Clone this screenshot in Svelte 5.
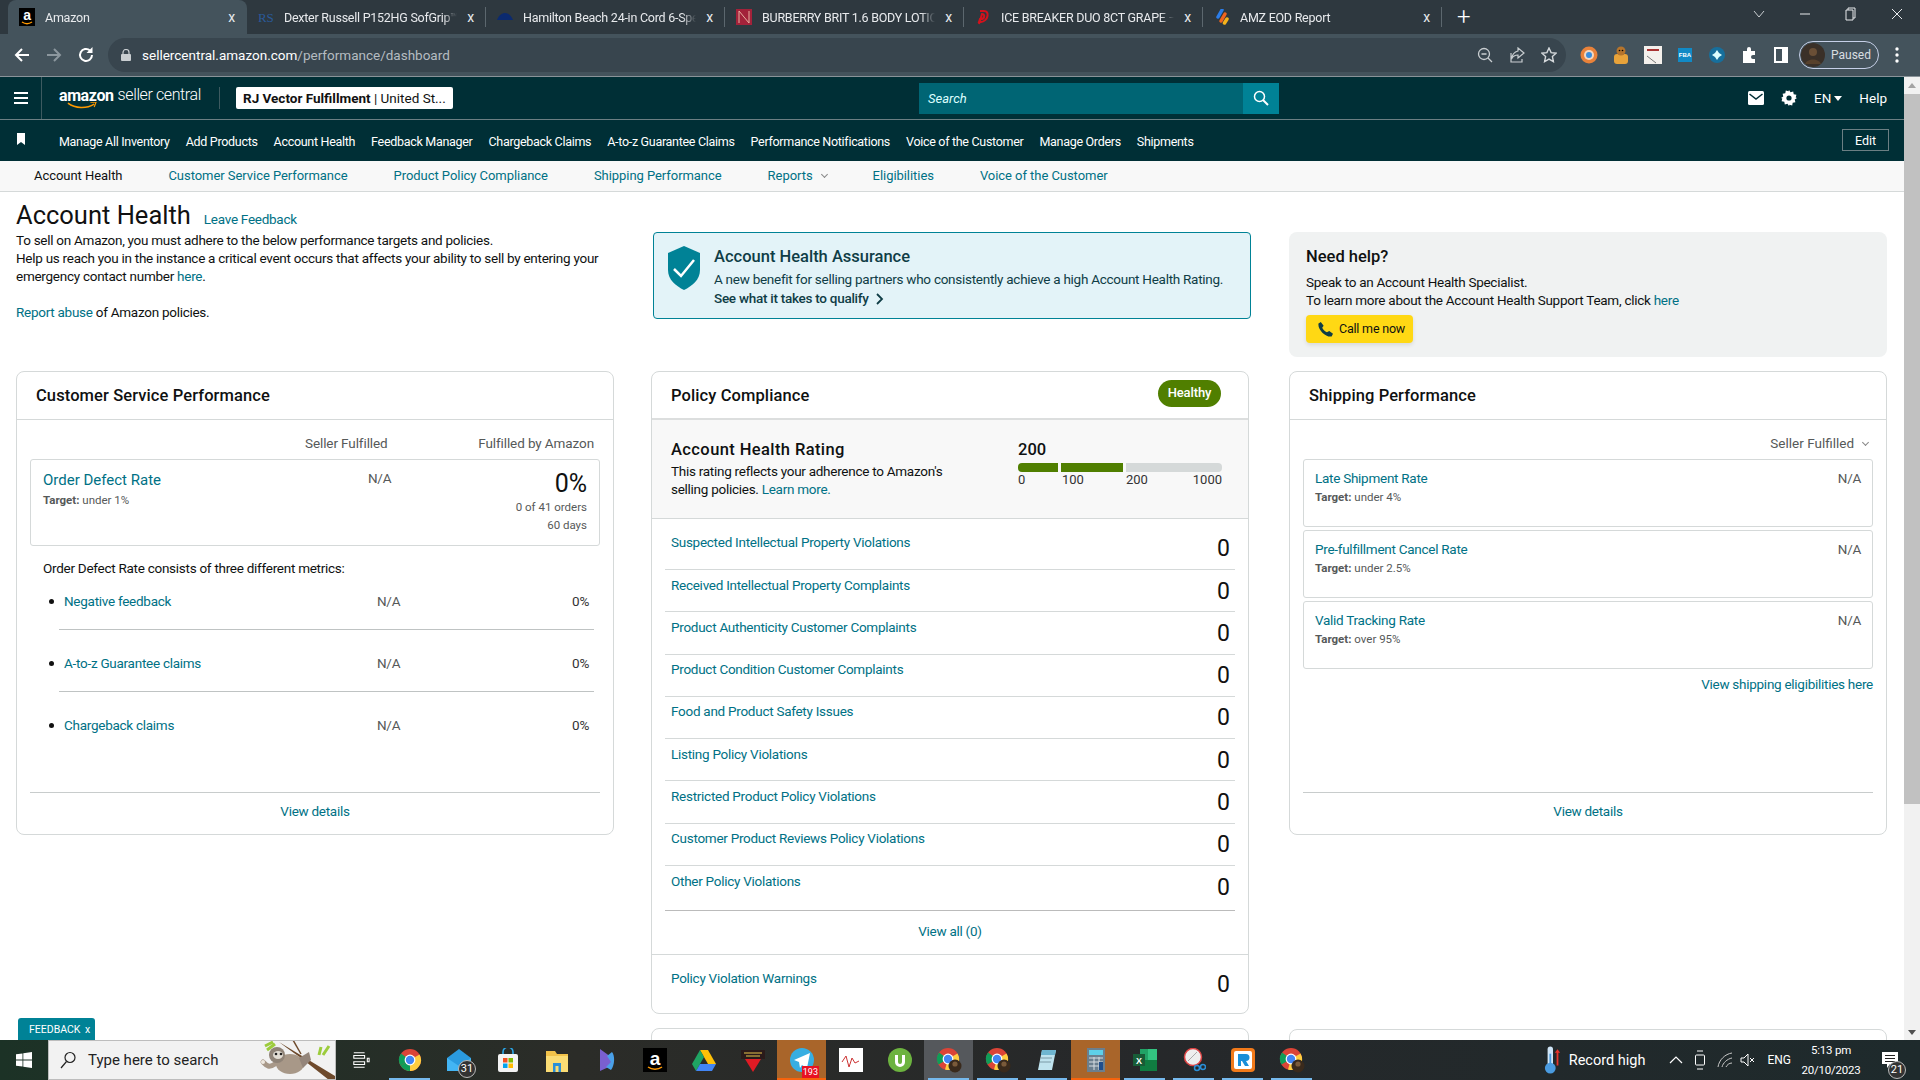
<script>
	const chromeIcon = `<svg viewBox="0 0 24 24" width="24" height="24"><circle cx="12" cy="12" r="11" fill="#db4437"/><path d="M12 12 2.5 17.5A11 11 0 0 1 3 5.5z" fill="#0f9d58"/><path d="M12 12l9.5-5.5A11 11 0 0 1 9 22.6z" fill="#ffcd40"/><path d="M12 12 2.5 17.5A11 11 0 0 0 12 23z" fill="#0f9d58"/><circle cx="12" cy="12" r="5.4" fill="#fff"/><circle cx="12" cy="12" r="4.2" fill="#4285f4"/></svg>`;
	const chromeProfile = `<svg viewBox="0 0 26 26" width="26" height="26"><circle cx="12" cy="12" r="11" fill="#db4437"/><path d="M12 12 2.5 17.5A11 11 0 0 1 3 5.5z" fill="#0f9d58"/><path d="M12 12l9.5-5.5A11 11 0 0 1 9 22.6z" fill="#ffcd40"/><circle cx="12" cy="12" r="5.4" fill="#fff"/><circle cx="12" cy="12" r="4.2" fill="#4285f4"/><circle cx="19" cy="19" r="6.5" fill="#3a2a1c"/><circle cx="19" cy="17" r="2.6" fill="#7a5a3a"/></svg>`;

	const tabs = [
		{ title: 'Dexter Russell P152HG SofGrip™', icon: `<svg viewBox="0 0 16 16" width="16" height="16"><text x="0" y="13" font-size="13" font-family="Liberation Serif" fill="#2a5a9a">RS</text></svg>` },
		{ title: 'Hamilton Beach 24-in Cord 6-Speed', icon: `<svg viewBox="0 0 16 16" width="16" height="16"><path d="M0 11C2 6 5 4 8 4s6 2 8 7z" fill="#0b2a6f"/></svg>` },
		{ title: 'BURBERRY BRIT 1.6 BODY LOTION', icon: `<svg viewBox="0 0 16 16" width="16" height="16"><rect width="16" height="16" fill="#a3223a"/><path d="M3 2v12M13 2v12M3 2l10 12" stroke="#e8b0a0" fill="none"/></svg>` },
		{ title: 'ICE BREAKER DUO 8CT GRAPE –', icon: `<svg viewBox="0 0 16 16" width="16" height="16"><path d="M5 2h4c3 0 4 2 3.500 5S9 13 6 13H4l1-3h1c2 0 3-1 3.200-2.500S8.500 5 7 5L4 15" stroke="#d3121c" stroke-width="2" fill="none"/></svg>` },
		{ title: 'AMZ EOD Report', icon: `<svg viewBox="0 0 16 16" width="16" height="16"><path d="M8 1 4 8" stroke="#2b7de9" stroke-width="3.500" stroke-linecap="round"/><path d="M11 5 7 12" stroke="#f0641e" stroke-width="3.500" stroke-linecap="round"/><path d="M13 10l-2.500 4" stroke="#f6b21b" stroke-width="3.500" stroke-linecap="round"/></svg>` }
	];

	const extensions = [
		`<svg viewBox="0 0 18 18" width="18" height="18"><circle cx="9" cy="9" r="8.500" fill="#e9823a"/><circle cx="9" cy="9" r="5" fill="#f3d7c0"/><circle cx="9" cy="9" r="3" fill="#3a8ddc"/></svg>`,
		`<svg viewBox="0 0 18 18" width="18" height="18"><rect x="2" y="8" width="14" height="10" rx="3" fill="#e8a33a"/><circle cx="9" cy="5" r="4.500" fill="#b5742c"/><circle cx="7.500" cy="4.500" r=".8"/><circle cx="10.500" cy="4.500" r=".8"/></svg>`,
		`<svg viewBox="0 0 18 18" width="18" height="18"><rect width="18" height="18" fill="#f4f0ec"/><path d="M3 4h12" stroke="#a33" stroke-width="2"/><path d="M3 10l9 7" stroke="#777" fill="none"/></svg>`,
		`<svg viewBox="0 0 18 18" width="18" height="18"><rect x="2" y="2" width="14" height="14" fill="#118ac6"/><text x="9" y="11" font-size="6" font-weight="700" text-anchor="middle" font-family="Liberation Sans" fill="#fff">FBA</text></svg>`,
		`<svg viewBox="0 0 18 18" width="18" height="18"><circle cx="9" cy="9" r="8" fill="#176f9c"/><path d="M9 4l2 3-2 2-2-2zM9 14l2-3-2-2-2 2zM4 9l3-2 2 2-2 2zM14 9l-3-2-2 2 2 2z" fill="#dff"/></svg>`,
		`<svg viewBox="0 0 18 18" width="18" height="18"><path d="M3 5h4V3a2 2 0 0 1 4 0v2h4v4h-2a2 2 0 0 0 0 4h2v4H3z" fill="#fff"/></svg>`,
		`<svg viewBox="0 0 18 18" width="18" height="18"><path d="M3 2h12v14H3z" fill="none" stroke="#fff" stroke-width="2"/><rect x="10" y="2" width="5" height="14" fill="#fff"/></svg>`
	];

	const nav = ['Manage All Inventory', 'Add Products', 'Account Health', 'Feedback Manager', 'Chargeback Claims', 'A-to-z Guarantee Claims', 'Performance Notifications', 'Voice of the Customer', 'Manage Orders', 'Shipments'];

	const metrics = ['Negative feedback', 'A-to-z Guarantee claims', 'Chargeback claims'];

	const violations = ['Suspected Intellectual Property Violations', 'Received Intellectual Property Complaints', 'Product Authenticity Customer Complaints', 'Product Condition Customer Complaints', 'Food and Product Safety Issues', 'Listing Policy Violations', 'Restricted Product Policy Violations', 'Customer Product Reviews Policy Violations', 'Other Policy Violations'];

	const shipping = [
		{ name: 'Late Shipment Rate', target: 'under 4%' },
		{ name: 'Pre-fulfillment Cancel Rate', target: 'under 2.5%' },
		{ name: 'Valid Tracking Rate', target: 'over 95%' }
	];

	const apps = [
		{ icon: `<svg viewBox="0 0 20 20" width="18" height="20"><path d="M2 2h12M2 5h12v3H2zM2 12h12v3H2zM2 18h12M17 8h2v4h-2z" stroke="#fff" fill="none" stroke-width="1.200"/></svg>` },
		{ open: true, icon: chromeIcon },
		{ badge: '31', icon: `<svg viewBox="0 0 26 26" width="26" height="26"><path d="M1 11 13 2l12 9v13H1z" fill="#2b9be0"/><path d="M1 11l12 8 12-8v13H1z" fill="#43b5f4"/></svg>` },
		{ icon: `<svg viewBox="0 0 24 24" width="24" height="24"><path d="M7 7V4a5 5 0 0 1 10 0v3" fill="none" stroke="#2aa6e8" stroke-width="1.600"/><rect x="2" y="6" width="20" height="18" rx="2" fill="#f3f3f3"/><rect x="7" y="10" width="4.500" height="4.500" fill="#f25022"/><rect x="12.500" y="10" width="4.500" height="4.500" fill="#7fba00"/><rect x="7" y="15.500" width="4.500" height="4.500" fill="#00a4ef"/><rect x="12.500" y="15.500" width="4.500" height="4.500" fill="#ffb900"/></svg>` },
		{ icon: `<svg viewBox="0 0 24 24" width="24" height="24"><path d="M1 3h9l2 3h11v18H1z" fill="#f2c24a"/><path d="M1 8h22v16H1z" fill="#fbdc74"/><path d="M8 24v-9h8v9h-2.500v-6h-3v6z" fill="#2a8fd8"/></svg>` },
		{ icon: `<svg viewBox="0 0 24 24" width="24" height="24"><path d="M6 1l11 8v9l-11 5z" fill="#7a5fd0"/><path d="M18 4c3 3 3 13-1 18l-5-3 5-5-4-6z" fill="#4aa0e8"/></svg>` },
		{ icon: `<svg viewBox="0 0 24 24" width="24" height="24"><rect width="24" height="24" fill="#000"/><text x="12" y="17" font-size="19" font-weight="700" text-anchor="middle" font-family="Liberation Sans" fill="#fff">a</text><path d="M5 19c4 3 10 3 14 0" stroke="#f90" stroke-width="1.500" fill="none"/></svg>` },
		{ icon: `<svg viewBox="0 0 24 24" width="24" height="24"><path d="M8 2h8l8 14h-8z" fill="#ffc107"/><path d="M8 2 0 16l4 7 8-14z" fill="#1fa463"/><path d="M4 23h16l4-7H8z" fill="#4285f4"/></svg>` },
		{ icon: `<svg viewBox="0 0 24 24" width="24" height="24"><rect y="2" width="24" height="9" fill="#2a1a1a"/><path d="M4 11h16l-8 13z" fill="#e01b24"/><path d="M3 5h18M5 8h14" stroke="#e8c34a"/></svg>` },
		{ active: true, badge2: '193', icon: `<svg viewBox="0 0 24 24" width="24" height="24"><circle cx="12" cy="12" r="12" fill="#37aee2"/><path d="M4 12 20 5l-3 15-5-3-2 3-1-6z" fill="#fff"/></svg>` },
		{ icon: `<svg viewBox="0 0 24 24" width="24" height="24"><rect width="24" height="24" fill="#fff"/><path d="M3 14l4-6 3 11 3-9 3 5 4-2" stroke="#c33" fill="none"/></svg>` },
		{ icon: `<svg viewBox="0 0 24 24" width="24" height="24"><circle cx="12" cy="12" r="12" fill="#6cb33f"/><path d="M7 7v7a5 5 0 0 0 10 0V7h-3v7a2 2 0 0 1-4 0V7z" fill="#fff"/></svg>` },
		{ open: true, hover: true, icon: chromeProfile },
		{ open: true, icon: chromeProfile },
		{ open: true, icon: `<svg viewBox="0 0 24 24" width="24" height="24"><path d="M7 2h14l-4 20H3z" fill="#bfe3ee"/><path d="M7 2h14l-1 5H6z" fill="#6fb6d0"/><path d="M6 10h11M5 14h11" stroke="#7b9aa6"/></svg>` },
		{ active: true, icon: `<svg viewBox="0 0 18 24" width="18" height="24"><rect width="18" height="24" fill="#6b7f8e"/><rect x="2" y="2" width="14" height="5" fill="#5ed0e8"/><path d="M2 10h14M2 14h14M2 18h14M7 9v13M12 9v13" stroke="#d8dee2"/><rect x="12" y="14" width="4" height="8" fill="#1f4e8c"/></svg>` },
		{ open: true, icon: `<svg viewBox="0 0 24 24" width="24" height="24"><rect x="7" y="1" width="17" height="22" fill="#21a366"/><rect x="15" y="1" width="9" height="22" fill="#33c481"/><rect x="7" y="12" width="17" height="11" fill="#107c41"/><rect y="6" width="12" height="12" fill="#185c37"/><text x="6" y="15.500" font-size="9" font-weight="700" text-anchor="middle" font-family="Liberation Sans" fill="#fff">X</text></svg>` },
		{ open: true, icon: `<svg viewBox="0 0 24 24" width="24" height="24"><circle cx="11" cy="9" r="8.500" fill="#eee" stroke="#d44" stroke-width="1.500"/><path d="M6 13 15 4" stroke="#aaa"/><circle cx="15" cy="20" r="2.500" fill="none" stroke="#2a8fd8" stroke-width="1.500"/><circle cx="21" cy="19" r="2.500" fill="none" stroke="#2a8fd8" stroke-width="1.500"/></svg>` },
		{ open: true, icon: `<svg viewBox="0 0 24 24" width="24" height="24"><rect width="24" height="24" rx="4" fill="#f27a1a"/><rect x="3" y="3" width="18" height="18" rx="2" fill="#fff"/><path d="M7 6h8a3 3 0 0 1 0 7l3 5h-4l-3-5h-1v5H7z" fill="#1a8fd8"/></svg>` },
		{ open: true, icon: chromeProfile }
	];
</script>

<div class="screen">
	<div class="tabstrip">
		<div class="tab current">
			<svg viewBox="0 0 16 18" width="16" height="18"><rect width="16" height="18" fill="#000"/><text x="8" y="12" font-size="14" font-weight="700" text-anchor="middle" font-family="Liberation Sans" fill="#fff">a</text><path d="M3 14c3 2 7 2 10 0" stroke="#f90" stroke-width="1.500" fill="none"/></svg>
			<span class="tab-title">Amazon</span>
			<span class="tab-x">x</span>
		</div>
		{#each tabs as tab}
			<div class="tab">
				{@html tab.icon}
				<span class="tab-title">{tab.title}</span>
				<span class="tab-x">x</span>
			</div>
		{/each}
		<span class="new-tab">+</span>
		<div class="win-controls">
			<svg viewBox="0 0 12 8" width="12" height="8"><path d="M1 1l5 6 5-6" fill="none" stroke="#c9ced1"/></svg>
			<svg viewBox="0 0 12 12" width="12" height="12"><path d="M1 6h10" stroke="#e8eaed"/></svg>
			<svg viewBox="0 0 12 14" width="12" height="14"><path d="M1 3h7v10H1zM3 3V1h7v10H8" fill="none" stroke="#e8eaed"/></svg>
			<svg viewBox="0 0 12 12" width="12" height="12"><path d="M1 1l10 10M11 1 1 11" stroke="#e8eaed"/></svg>
		</div>
	</div>

	<div class="toolbar">
		<div class="tb-nav">
			<svg viewBox="0 0 18 18" width="18" height="18"><path d="M16 9H3M9 3 3 9l6 6" fill="none" stroke="#fff" stroke-width="2"/></svg>
			<svg viewBox="0 0 18 18" width="18" height="18"><path d="M2 9h13M9 3l6 6-6 6" fill="none" stroke="#8c979e" stroke-width="2"/></svg>
			<svg viewBox="0 0 18 18" width="18" height="18"><path d="M15 9a6 6 0 1 1-2-4.500" fill="none" stroke="#fff" stroke-width="2"/><path d="M15.500 1v6h-6z" fill="#fff"/></svg>
		</div>
		<div class="omnibox">
			<svg viewBox="0 0 10 12" width="10" height="12"><path d="M2 5V3.500a3 3 0 0 1 6 0V5" fill="none" stroke="#c9ced1" stroke-width="1.200"/><rect y="5" width="10" height="7" rx="1" fill="#c9ced1"/></svg>
			<span class="url">sellercentral.amazon.com<span class="url-path">/performance/dashboard</span></span>
			<div class="omni-icons">
				<svg viewBox="0 0 16 16" width="16" height="16"><circle cx="7" cy="7" r="5.500" fill="none" stroke="#c9ced1" stroke-width="1.300"/><path d="M11 11l4 4M4.500 7h5" stroke="#c9ced1" stroke-width="1.300"/></svg>
				<svg viewBox="0 0 16 16" width="16" height="16"><path d="M9 1l6 5-6 5V8C6 8 4 9 2.500 12 3 8 5 5 9 4zM2 6v9h11v-3" fill="none" stroke="#c9ced1" stroke-width="1.200"/></svg>
				<svg viewBox="0 0 16 16" width="16" height="16"><path d="M8 1l2.100 4.600 5 .6-3.700 3.400 1 5L8 12.100 3.600 14.600l1-5L.9 6.200l5-.6z" fill="none" stroke="#d5d9dc" stroke-width="1.400"/></svg>
			</div>
		</div>
		<div class="extensions">
			{#each extensions as ext}
				<span class="ext">{@html ext}</span>
			{/each}
		</div>
		<div class="profile">
			<svg viewBox="0 0 24 24" width="24" height="24"><circle cx="12" cy="12" r="12" fill="#3a3028"/><circle cx="12" cy="9" r="4" fill="#6a4f36"/><path d="M4 21c2-6 14-6 16 0" fill="#57412c"/></svg>
			<span>Paused</span>
		</div>
		<svg class="dots" viewBox="0 0 4 16" width="4" height="16"><circle cx="2" cy="2" r="1.700" fill="#fff"/><circle cx="2" cy="8" r="1.700" fill="#fff"/><circle cx="2" cy="14" r="1.700" fill="#fff"/></svg>
	</div>

	<div class="viewport">
		<div class="page">
			<header class="topbar">
				<div class="burger"><span></span><span></span><span></span></div>
				<div class="logo">
					<span class="logo-amazon">amazon<svg viewBox="0 0 32 8" width="30" height="8"><path d="M1 1c8 6 20 6 28 1" fill="none" stroke="#f90" stroke-width="1.600"/><path d="M25 0h6l-2 5" fill="none" stroke="#f90" stroke-width="1.200"/></svg></span>
					<span class="logo-seller">seller central</span>
				</div>
				<div class="account"><b>RJ Vector Fulfillment</b> | United St...</div>
				<div class="search">
					<span class="search-input">Search</span>
					<span class="search-btn"><svg viewBox="0 0 16 16" width="16" height="16"><circle cx="6.500" cy="6.500" r="5" fill="none" stroke="#fff" stroke-width="1.500"/><path d="M10 10l5 5" stroke="#fff" stroke-width="2"/></svg></span>
				</div>
				<div class="top-right">
					<svg viewBox="0 0 16 14" width="16" height="14"><rect width="16" height="14" rx="1.500" fill="#fff"/><path d="M1.500 3 8 8l6.500-5" fill="none" stroke="#002f36" stroke-width="1.500"/></svg>
					<svg viewBox="0 0 16 16" width="16" height="16"><path d="M8 0l1.500 2.300 2.700-.7.500 2.700 2.700.5-.7 2.700L16 8l-2.300 1.500.7 2.700-2.700.5-.5 2.700-2.700-.7L8 16l-1.500-2.300-2.700.7-.5-2.700-2.700-.5.7-2.700L0 8l2.300-1.500-.7-2.700 2.700-.5.5-2.700 2.700.7z" fill="#fff"/><circle cx="8" cy="8" r="2.600" fill="#002f36"/></svg>
					<span class="lang">EN<i class="caret"></i></span>
					<span>Help</span>
				</div>
			</header>

			<nav class="shortcuts">
				<svg viewBox="0 0 10 12" width="10" height="12"><path d="M1 0h8v12L5 9l-4 3z" fill="#fff"/></svg>
				<div class="shortcut-list">
					{#each nav as item}
						<span>{item}</span>
					{/each}
				</div>
				<button class="edit">Edit</button>
			</nav>

			<div class="subnav">
				<span class="sub-current">Account Health</span>
				<span>Customer Service Performance</span>
				<span>Product Policy Compliance</span>
				<span>Shipping Performance</span>
				<span>Reports<i class="mini-caret"></i></span>
				<span>Eligibilities</span>
				<span>Voice of the Customer</span>
			</div>

			<main class="content">
				<section class="col col-left">
					<div class="intro">
						<div class="title-row">
							<h1>Account Health</h1>
							<a href="#top">Leave Feedback</a>
						</div>
						<p>To sell on Amazon, you must adhere to the below performance targets and policies.<br />Help us reach you in the instance a critical event occurs that affects your ability to sell by entering your emergency contact number <a href="#top">here</a>.</p>
						<p class="abuse"><a href="#top">Report abuse</a> of Amazon policies.</p>
					</div>

					<div class="card short">
						<h2 class="card-head">Customer Service Performance</h2>
						<div class="card-body">
							<div class="col-heads">
								<span class="head-sf">Seller Fulfilled</span>
								<span class="head-fba">Fulfilled by Amazon</span>
							</div>
							<div class="box odr">
								<div class="odr-name">
									<a class="metric-link" href="#top">Order Defect Rate</a>
									<div class="target"><b>Target:</b> under 1%</div>
								</div>
								<div class="odr-na">N/A</div>
								<div class="odr-value">
									<div class="big-pct">0%</div>
									<div class="minor">0 of 41 orders</div>
									<div class="minor">60 days</div>
								</div>
							</div>
							<p class="consists">Order Defect Rate consists of three different metrics:</p>
							<ul class="metric-list">
								{#each metrics as m}
									<li>
										<a href="#top">{m}</a>
										<span class="m-na">N/A</span>
										<span class="m-pct">0%</span>
									</li>
								{/each}
							</ul>
							<div class="card-foot"><a href="#top">View details</a></div>
						</div>
					</div>
				</section>

				<section class="col col-mid">
					<div class="assurance">
						<svg viewBox="0 0 32 44" width="32" height="44"><path d="M16 0 32 7v17c0 10-8 16-16 20C8 40 0 34 0 24V7z" fill="#008296"/><path d="M6 23l7 7L26 14" fill="none" stroke="#fff" stroke-width="2.500"/></svg>
						<div>
							<h3>Account Health Assurance</h3>
							<p>A new benefit for selling partners who consistently achieve a high Account Health Rating.</p>
							<p class="qualify">See what it takes to qualify <svg viewBox="0 0 8 12" width="8" height="12"><path d="M1 1l5 5-5 5" fill="none" stroke="#0f3d46" stroke-width="1.800"/></svg></p>
						</div>
					</div>

					<div class="card">
						<div class="card-head policy-head">
							<h2>Policy Compliance</h2>
							<span class="healthy">Healthy</span>
						</div>
						<div class="rating">
							<div class="rating-text">
								<h3>Account Health Rating</h3>
								<p>This rating reflects your adherence to Amazon's selling policies. <a href="#top">Learn more.</a></p>
							</div>
							<div class="rating-score">
								<div class="score">200</div>
								<div class="bar"><i class="seg-a"></i><i class="seg-b"></i><i class="seg-c"></i></div>
								<div class="scale"><span class="s0">0</span><span class="s1">100</span><span class="s2">200</span><span class="s3">1000</span></div>
							</div>
						</div>
						<div class="violations">
							{#each violations as v}
								<div class="v-row">
									<a href="#top">{v}</a>
									<span class="count">0</span>
								</div>
							{/each}
						</div>
						<div class="view-all"><a href="#top">View all (0)</a></div>
						<div class="warnings">
							<a href="#top">Policy Violation Warnings</a>
							<span class="count">0</span>
						</div>
					</div>
					<div class="card next-card"></div>
				</section>

				<section class="col col-right">
					<div class="help">
						<h3>Need help?</h3>
						<p>Speak to an Account Health Specialist.<br />To learn more about the Account Health Support Team, click <a href="#top">here</a></p>
						<button class="call">
							<svg viewBox="0 0 16 16" width="15" height="15"><path d="M3 0l3 4-1.500 2c1 2 3 4 5 5L12 9.500l4 3-1.500 3C8 16.500-.5 8 .5 1.500z" fill="#0f3d46"/></svg>
							Call me now
						</button>
					</div>

					<div class="card short">
						<h2 class="card-head">Shipping Performance</h2>
						<div class="card-body">
							<div class="ship-filter">Seller Fulfilled<i class="mini-caret"></i></div>
							{#each shipping as s}
								<div class="box ship-box">
									<div>
										<a href="#top">{s.name}</a>
										<div class="target"><b>Target:</b> {s.target}</div>
									</div>
									<span class="ship-na">N/A</span>
								</div>
							{/each}
							<div class="ship-link"><a href="#top">View shipping eligibilities here</a></div>
							<div class="card-foot"><a href="#top">View details</a></div>
						</div>
					</div>
					<div class="card next-card"></div>
				</section>
			</main>
			<div class="feedback">FEEDBACK <span>x</span></div>
		</div>

		<div class="scrollbar">
			<span class="arrow-up"></span>
			<div class="thumb"></div>
			<span class="arrow-down"></span>
		</div>
	</div>

	<footer class="taskbar">
		<div class="start">
			<svg viewBox="0 0 16 16" width="16" height="16"><path d="M0 2.300 6.500 1.400v6.200H0zM7.300 1.300 16 0v7.600H7.300zM0 8.400h6.500v6.200L0 13.700zM7.300 8.400H16V16l-8.700-1.300z" fill="#fff"/></svg>
		</div>
		<div class="tb-search">
			<svg viewBox="0 0 16 18" width="16" height="18"><circle cx="10" cy="6.500" r="5" fill="none" stroke="#222" stroke-width="1.200"/><path d="M6.500 10.500 1 17" stroke="#222" stroke-width="1.200"/></svg>
			<span>Type here to search</span>
			<svg class="sloth" viewBox="0 0 86 40" width="86" height="40">
				<path d="M16 6l8-4M18 10l8-6" stroke="#9ccc3c" stroke-width="3"/>
				<path d="M70 15l2-8M74 15l6-9" stroke="#9ccc3c" stroke-width="3"/>
				<path d="M30 2 86 36v4H80L52 18 38 8z" fill="#6e4a2c"/>
				<path d="M44 0l8 14" stroke="#6e4a2c" stroke-width="1.500"/>
				<ellipse cx="41" cy="24" rx="14" ry="10" fill="#a89888"/>
				<path d="M50 18l10-6 2 8-8 8z" fill="#94857a"/>
				<path d="M26 24C20 28 18 26 14 22" stroke="#a89888" stroke-width="5" fill="none" stroke-linecap="round"/>
				<circle cx="28" cy="15" r="8" fill="#8f8377"/>
				<ellipse cx="29" cy="15" rx="5" ry="4" fill="#e2dcd3"/>
				<circle cx="27" cy="14" r="1.300" fill="#222"/>
				<circle cx="32" cy="14" r="1.300" fill="#222"/>
				<circle cx="14" cy="22" r="2" fill="#efe9e0"/>
			</svg>
		</div>
		<div class="apps">
			{#each apps as app}
				<div class="app" class:open={app.open} class:active={app.active} class:hover={app.hover}>
					{@html app.icon}
					{#if app.badge}<span class="badge-round">{app.badge}</span>{/if}
					{#if app.badge2}<span class="badge-red">{app.badge2}</span>{/if}
				</div>
			{/each}
		</div>
		<div class="tray">
			<svg viewBox="0 0 20 34" width="18" height="32"><rect x="4" y="2" width="6" height="24" rx="3" fill="#cfe5f7"/><circle cx="7" cy="26" r="6" fill="#4a9be0"/><rect x="6" y="10" width="2" height="16" fill="#4a9be0"/><path d="M15 5l3 4h-2v14h-2V9h-2z" fill="#e6332a"/></svg>
			<span class="record">Record high</span>
			<svg viewBox="0 0 14 8" width="14" height="8"><path d="M1 7l6-6 6 6" fill="none" stroke="#fff" stroke-width="1.200"/></svg>
			<svg viewBox="0 0 12 20" width="12" height="20"><path d="M3 1h6M3 19h6" stroke="#fff"/><rect x="1.500" y="5" width="9" height="10" rx="1" fill="none" stroke="#fff"/></svg>
			<svg class="wifi" viewBox="0 0 16 16" width="16" height="16"><path d="M1 15C2 8 8 2 15 1M5 15c1-4 5-8 10-9M9 15c1-2 3-4 6-4" fill="none" stroke="#c8c8c8"/></svg>
			<svg viewBox="0 0 16 16" width="16" height="16"><path d="M1 6h3l4-4v12l-4-4H1z" fill="none" stroke="#fff"/><path d="M10 6l4 4M14 6l-4 4" stroke="#fff"/></svg>
			<span class="eng">ENG</span>
			<div class="clock"><div>5:13 pm</div><div>20/10/2023</div></div>
			<div class="notif">
				<svg viewBox="0 0 16 16" width="16" height="16"><path d="M0 0h16v12H8l-3 4v-4H0z" fill="#fff"/><path d="M3 3.500h10M3 6.500h10M3 9.500h10" stroke="#222"/></svg>
				<span class="badge-round">21</span>
			</div>
		</div>
	</footer>
</div>

<style>
	:global(body) {
		margin: 0;
		background: #fff;
		font-family: Roboto, 'Liberation Sans', sans-serif;
		overflow: hidden;
	}

	.screen {
		width: 1920px;
		height: 1080px;
		display: flex;
		flex-direction: column;
		overflow: hidden;
	}

	a {
		color: #007185;
		text-decoration: none;
	}

	p,
	h1,
	h2,
	h3,
	ul {
		margin: 0;
		padding: 0;
		font-weight: 400;
	}

	/* browser chrome */
	.tabstrip {
		height: 34px;
		background: #2e383f;
		display: flex;
		align-items: center;
		padding-left: 8px;
		color: #e8eaed;
		font-size: 12.500px;
		letter-spacing: -0.25px;
		position: relative;
	}

	.tab {
		width: 239px;
		height: 34px;
		box-sizing: border-box;
		display: flex;
		align-items: center;
		gap: 10px;
		padding: 0 12px 0 11px;
		position: relative;
	}

	.tab + .tab::after {
		content: '';
		position: absolute;
		right: 0;
		top: 7px;
		bottom: 7px;
		width: 1px;
		background: #5c676e;
	}

	.tab.current {
		background: #44535c;
		border-radius: 8px 8px 0 0;
		height: 34px;
	}

	.tab-title {
		flex: 1;
		white-space: nowrap;
		overflow: hidden;
		mask-image: linear-gradient(90deg, #000 92%, transparent);
	}

	.tab-x {
		font-size: 14px;
		color: #e8eaed;
	}

	.new-tab {
		font-size: 24px;
		font-weight: 300;
		margin-left: 15px;
		color: #fff;
		line-height: 1;
	}

	.win-controls {
		margin-left: auto;
		display: flex;
		align-items: center;
		gap: 34px;
		padding: 0 17px 6px 0;
	}

	.toolbar {
		height: 42px;
		background: #44535c;
		display: flex;
		align-items: center;
		border-bottom: 1px solid #8a9399;
	}

	.tb-nav {
		width: 108px;
		box-sizing: border-box;
		padding-left: 13px;
		display: flex;
		gap: 14px;
	}

	.omnibox {
		width: 1458px;
		height: 34px;
		background: #38454e;
		border-radius: 17px;
		box-sizing: border-box;
		display: flex;
		align-items: center;
		padding: 0 9px 0 13px;
		gap: 11px;
	}

	.url {
		color: #fff;
		font-size: 13.500px;
	}

	.url-path {
		color: #b5bcc1;
	}

	.omni-icons {
		margin-left: auto;
		display: flex;
		gap: 16px;
	}

	.extensions {
		display: flex;
		gap: 14px;
		margin-left: 14px;
		align-items: center;
	}

	.ext {
		display: flex;
	}

	.profile {
		margin-left: 9px;
		width: 80px;
		height: 28px;
		border: 1px solid #c6d0e8;
		border-radius: 14px;
		box-sizing: border-box;
		display: flex;
		align-items: center;
		gap: 6px;
		padding-left: 1px;
		color: #d8dde0;
		font-size: 12px;
	}

	.dots {
		margin-left: 16px;
	}

	.viewport {
		flex: 1;
		display: flex;
		min-height: 0;
	}

	.page {
		flex: 1;
		min-width: 0;
		position: relative;
		overflow: hidden;
	}

	/* seller central bars */
	.topbar {
		height: 43px;
		box-sizing: border-box;
		background: #002f36;
		border-bottom: 1px solid #6c7f83;
		display: flex;
		align-items: center;
		color: #fff;
		font-size: 13.500px;
	}

	.burger {
		width: 42px;
		height: 42px;
		border-right: 1px solid #3d5a60;
		display: flex;
		flex-direction: column;
		justify-content: center;
		align-items: center;
		gap: 3px;
		box-sizing: border-box;
	}

	.burger span {
		width: 14px;
		height: 2px;
		background: #fff;
	}

	.logo {
		margin-left: 17px;
		width: 160px;
		height: 22px;
		display: flex;
		align-items: flex-start;
		gap: 4px;
		border-right: 1px solid #3d5a60;
		line-height: 1;
	}

	.logo-amazon {
		font-size: 16px;
		font-weight: 700;
		letter-spacing: -0.4px;
		display: flex;
		flex-direction: column;
		margin-top: 1px;
	}

	.logo-amazon svg {
		margin: -2px 0 0 8px;
	}

	.logo-seller {
		font-size: 16px;
		letter-spacing: -0.4px;
		font-weight: 300;
	}

	.account {
		margin-left: 16px;
		width: 217px;
		height: 22px;
		line-height: 22px;
		box-sizing: border-box;
		padding-left: 7px;
		background: #fff;
		color: #111;
		border-radius: 2px;
		font-size: 13.500px;
		white-space: nowrap;
	}

	.search {
		margin-left: 466px;
		width: 360px;
		height: 31px;
		display: flex;
		background: #006574;
	}

	.search-input {
		flex: 1;
		padding-left: 9px;
		line-height: 31px;
		font-style: italic;
		font-size: 13px;
		color: #dff;
	}

	.search-btn {
		width: 36px;
		background: #008296;
		display: flex;
		align-items: center;
		justify-content: center;
	}

	.top-right {
		margin-left: auto;
		padding-right: 17px;
		display: flex;
		align-items: center;
		gap: 17px;
	}

	.lang {
		display: flex;
		align-items: center;
		gap: 3px;
	}

	.caret {
		border: 4px solid transparent;
		border-top: 5px solid #fff;
		border-bottom: 0;
	}

	.shortcuts {
		height: 41px;
		background: #002f36;
		display: flex;
		align-items: center;
		color: #fff;
		font-size: 12.500px;
		letter-spacing: -0.3px;
		padding-left: 16px;
	}

	.shortcuts svg {
		margin-bottom: 3px;
	}

	.shortcut-list {
		display: flex;
		gap: 16px;
		margin-left: 33px;
		margin-top: 2px;
		white-space: nowrap;
	}

	.edit {
		margin-left: auto;
		margin-right: 15px;
		margin-bottom: 1px;
		width: 47px;
		height: 22px;
		background: transparent;
		color: #fff;
		border: 1px solid #6c7f83;
		font: inherit;
		padding: 0;
	}

	.subnav {
		height: 31px;
		box-sizing: border-box;
		background: #f8f8f8;
		border-bottom: 1px solid #d5d9d9;
		display: flex;
		align-items: center;
		gap: 46px;
		padding: 0 0 2px 34px;
		font-size: 13px;
		letter-spacing: -0.05px;
		color: #007185;
		white-space: nowrap;
	}

	.sub-current {
		color: #0f1111;
	}

	.mini-caret {
		display: inline-block;
		width: 4px;
		height: 4px;
		border-right: 1px solid #888;
		border-bottom: 1px solid #888;
		transform: rotate(45deg);
		margin: 0 0 3px 9px;
	}

	/* content */
	.content {
		display: grid;
		grid-template-columns: 635px 638px 598px;
		padding-left: 16px;
		color: #0f1111;
		font-size: 13.500px;
		letter-spacing: -0.27px;
		line-height: 18px;
	}

	.col {
		width: 598px;
	}

	.col-mid .assurance {
		margin-left: 2px;
		margin-right: -2px;
	}

	.intro {
		height: 179px;
		box-sizing: border-box;
		padding-top: 8px;
	}

	.title-row {
		display: flex;
		align-items: flex-end;
		height: 30px;
		margin-bottom: 1px;
	}

	h1 {
		font-size: 25.500px;
		line-height: 30px;
		color: #111;
		letter-spacing: 0;
	}

	.title-row a {
		margin-left: 13px;
		line-height: 22px;
	}

	.abuse {
		margin-top: 18px;
	}

	.card {
		border: 1px solid #d5d9d9;
		border-radius: 8px;
		background: #fff;
		box-sizing: border-box;
	}

	.short {
		height: 464px;
		display: flex;
		flex-direction: column;
	}

	.card-head {
		height: 48px;
		box-sizing: border-box;
		border-bottom: 1px solid #d5d9d9;
		font-size: 16.500px;
		font-weight: 500;
		letter-spacing: 0.1px;
		line-height: 47px;
		padding-left: 19px;
	}

	.card-body {
		flex: 1;
		padding: 0 13px;
		display: flex;
		flex-direction: column;
		position: relative;
	}

	.col-heads {
		height: 39px;
		position: relative;
		color: #565959;
		letter-spacing: -0.1px;
	}

	.head-sf {
		position: absolute;
		left: 275px;
		top: 14px;
	}

	.head-fba {
		position: absolute;
		right: 6px;
		top: 14px;
	}

	.box {
		border: 1px solid #d5d9d9;
		border-radius: 3px;
		box-sizing: border-box;
	}

	.odr {
		height: 87px;
		display: grid;
		grid-template-columns: 325px 1fr 150px;
		padding: 11px 12px;
	}

	.metric-link {
		font-size: 15px;
		letter-spacing: 0;
	}

	.target {
		font-size: 11.500px;
		letter-spacing: 0;
		color: #565959;
		line-height: 18px;
		margin-top: 2px;
	}

	.target b {
		font-weight: 700;
	}

	.odr-na {
		color: #565959;
		margin-top: -2px;
	}

	.odr-value {
		text-align: right;
	}

	.big-pct {
		font-size: 25px;
		letter-spacing: 0;
		line-height: 28px;
		margin-top: -1px;
	}

	.minor {
		font-size: 11.500px;
		letter-spacing: 0;
		color: #565959;
	}

	.consists {
		margin: 13px 0 0 13px;
	}

	.metric-list {
		list-style: none;
		margin: 15px 0 0 0;
	}

	.metric-list li {
		height: 38px;
		margin-bottom: 24px;
		box-sizing: border-box;
		margin-left: 29px;
		margin-right: 6px;
		border-bottom: 1px solid #bfc3c3;
		display: flex;
		position: relative;
	}

	.metric-list li:last-child {
		border-bottom: 0;
	}

	.metric-list li::before {
		content: '';
		position: absolute;
		left: -10px;
		top: 7px;
		width: 5px;
		height: 5px;
		border-radius: 50%;
		background: #111;
	}

	.metric-list a {
		margin-left: 5px;
		width: 313px;
	}

	.m-na {
		color: #565959;
	}

	.m-pct {
		color: #333;
		margin-left: auto;
		padding-right: 5px;
	}

	.card-foot {
		position: absolute;
		left: 13px;
		right: 13px;
		bottom: 0;
		height: 41px;
		border-top: 1px solid #c8cccc;
		text-align: center;
		line-height: 36px;
	}

	.assurance {
		height: 87px;
		box-sizing: border-box;
		background: #e3f3f8;
		border: 1px solid #008296;
		border-radius: 4px;
		display: flex;
		gap: 14px;
		padding: 14px 14px;
		margin-bottom: 52px;
		margin-top: 40px;
		color: #0f3d46;
	}

	.assurance svg {
		margin-top: -1px;
	}

	.assurance h3 {
		font-size: 16.500px;
		font-weight: 500;
		letter-spacing: 0;
		line-height: 20px;
		margin-bottom: 3px;
	}

	.qualify {
		font-weight: 500;
		margin-top: 1px;
	}

	.qualify svg {
		margin: 0 0 0 4px;
		vertical-align: -2px;
	}

	.policy-head {
		display: flex;
		justify-content: space-between;
		align-items: center;
		border-bottom: 2px solid #dcdede;
		padding-right: 27px;
		height: 48px;
	}

	.policy-head h2 {
		font-size: 16.500px;
		font-weight: 500;
	}

	.healthy {
		background: #507f00;
		color: #fff;
		border-radius: 14px;
		height: 27px;
		width: 63px;
		text-align: center;
		line-height: 25px;
		font-size: 13px;
		font-weight: 500;
		letter-spacing: -0.1px;
		margin-top: -3px;
	}

	.rating {
		height: 99px;
		background: #f8f8f8;
		border-bottom: 1px solid #d5d9d9;
		display: flex;
		box-sizing: border-box;
		padding: 19px 26px 0 19px;
		justify-content: space-between;
	}

	.rating-text {
		width: 285px;
	}

	.rating h3,
	.score {
		font-size: 16.500px;
		font-weight: 500;
		letter-spacing: 0.4px;
		line-height: 22px;
		margin-bottom: 1px;
	}

	.rating-score {
		width: 204px;
	}

	.score {
		margin-bottom: 2px;
		letter-spacing: 0;
	}

	.bar {
		display: flex;
		gap: 3px;
		height: 9px;
	}

	.bar i {
		display: block;
		height: 9px;
	}

	.seg-a {
		width: 40px;
		background: #507f00;
		border-radius: 4px 0 0 4px;
	}

	.seg-b {
		width: 62px;
		background: #507f00;
	}

	.seg-c {
		flex: 1;
		background: #d5d9d9;
		border-radius: 0 4px 4px 0;
	}

	.scale {
		position: relative;
		height: 16px;
		font-size: 13px;
		letter-spacing: 0;
		line-height: 16px;
		color: #333;
	}

	.scale span {
		position: absolute;
		top: 0;
	}

	.s0 { left: 0; }
	.s1 { left: 44px; }
	.s2 { left: 108px; }
	.s3 { right: 0; }

	.violations {
		padding: 0 13px;
	}

	.v-row {
		height: 42.300px;
		box-sizing: border-box;
		border-bottom: 1px solid #d5d9d9;
		display: flex;
		justify-content: space-between;
		padding: 5.500px 5px 0 6px;
	}

	.v-row:first-child {
		height: 51px;
		padding-top: 14px;
	}

	.v-row:last-child {
		height: 45px;
		border-bottom-color: #bbb;
	}

	.count {
		font-size: 23px;
		letter-spacing: 0;
		color: #111;
		margin-top: 6px;
		line-height: 20px;
	}

	.view-all {
		text-align: center;
		height: 44px;
		border-bottom: 1px solid #d5d9d9;
		line-height: 41px;
		box-sizing: border-box;
	}

	.warnings {
		display: flex;
		justify-content: space-between;
		padding: 14px 18px 0 19px;
	}

	.next-card {
		height: 40px;
		margin-top: 14px;
	}

	.col-right .next-card {
		margin-top: 194px;
	}

	.col-mid .card {
		height: 643px;
	}

	.col-mid .next-card {
		height: 40px;
	}

	.help {
		height: 125px;
		background: #f0f2f2;
		border-radius: 8px;
		box-sizing: border-box;
		padding: 15px 17px;
		margin: 40px 0 14px;
	}

	.help h3 {
		font-size: 16.500px;
		font-weight: 500;
		letter-spacing: 0;
		line-height: 20px;
		margin-bottom: 6px;
	}

	.call {
		margin-top: 6px;
		width: 107px;
		height: 28px;
		background: #ffd814;
		border: 0;
		border-radius: 4px;
		box-shadow: 0 2px 4px rgba(0, 0, 0, 0.1);
		font: inherit;
		font-size: 12.500px;
		letter-spacing: -0.2px;
		color: #0f1111;
		display: flex;
		align-items: center;
		gap: 6px;
		padding: 0 0 0 12px;
	}

	.ship-filter {
		height: 39px;
		line-height: 18px;
		text-align: right;
		padding-top: 14px;
		box-sizing: border-box;
		padding-right: 5px;
		color: #565959;
		letter-spacing: 0;
	}

	.ship-box {
		height: 68px;
		margin-bottom: 3px;
		display: flex;
		justify-content: space-between;
		padding: 9px 11px;
	}

	.ship-box .target {
		margin-top: 1px;
	}

	.ship-na {
		color: #565959;
	}

	.ship-link {
		text-align: right;
		margin-top: 3px;
	}

	.feedback {
		position: absolute;
		left: 18px;
		bottom: 0;
		width: 77px;
		height: 22px;
		box-sizing: border-box;
		background: #008296;
		border-radius: 3px 3px 0 0;
		color: #fff;
		font-size: 10.500px;
		line-height: 23px;
		padding-left: 11px;
		white-space: nowrap;
	}

	.feedback span {
		margin-left: 2px;
	}

	.scrollbar {
		width: 16px;
		background: #f1f1f1;
		display: flex;
		flex-direction: column;
		align-items: center;
	}

	.thumb {
		width: 16px;
		height: 710px;
		background: #c1c1c1;
		margin-top: 6px;
	}

	.arrow-up {
		margin-top: 6px;
		border: 4px solid transparent;
		border-bottom: 5px solid #a3a3a3;
		border-top: 0;
	}

	.arrow-down {
		margin-top: auto;
		margin-bottom: 5px;
		border: 4px solid transparent;
		border-top: 5px solid #505050;
		border-bottom: 0;
	}

	/* windows taskbar */
	.taskbar {
		height: 40px;
		background: linear-gradient(90deg, #1c3226 0, #2b2c28 30%, #26282a 60%, #1e2a2c 100%);
		display: flex;
		align-items: center;
		color: #fff;
	}

	.start {
		width: 48px;
		display: flex;
		justify-content: center;
		height: 40px;
		align-items: center;
	}

	.tb-search {
		width: 288px;
		height: 40px;
		box-sizing: border-box;
		background: #f2f2f2;
		border: 1px solid #bdbdbd;
		display: flex;
		align-items: center;
		gap: 12px;
		padding-left: 11px;
		color: #222;
		font-size: 15px;
		position: relative;
		overflow: hidden;
	}

	.sloth {
		position: absolute;
		right: 0;
		top: -1px;
	}

	.apps {
		display: flex;
		height: 40px;
	}

	.app {
		width: 49px;
		height: 40px;
		display: flex;
		align-items: center;
		justify-content: center;
		position: relative;
		box-sizing: border-box;
	}

	.app.open::after {
		content: '';
		position: absolute;
		left: 4px;
		right: 4px;
		bottom: 0;
		height: 2px;
		background: #76b9ed;
	}

	.app.active {
		background: #a9652a;
	}

	.app.active::after {
		content: '';
		position: absolute;
		left: 0;
		right: 0;
		bottom: 0;
		height: 2px;
		background: #f7630c;
	}

	.app.hover {
		background: #55585c;
	}

	.badge-round {
		position: absolute;
		right: 7px;
		bottom: 2px;
		width: 18px;
		height: 18px;
		line-height: 16px;
		box-sizing: border-box;
		border: 1px solid #bbb;
		background: #333;
		border-radius: 50%;
		text-align: center;
		font-size: 11px;
		color: #fff;
	}

	.badge-red {
		position: absolute;
		right: 7px;
		bottom: 2px;
		background: #e81123;
		font-size: 9px;
		line-height: 12px;
		padding: 0 1px;
		color: #fff;
	}

	.tray {
		margin-left: auto;
		display: flex;
		align-items: center;
		gap: 11px;
		font-size: 13px;
		height: 40px;
		padding-right: 14px;
	}

	.record {
		font-size: 14.500px;
		margin: 0 13px 0 -4px;
	}

	.wifi {
		margin-right: -4px;
	}

	.eng {
		font-size: 12px;
	}

	.clock {
		font-size: 11.500px;
		letter-spacing: -0.2px;
		line-height: 20px;
		text-align: center;
		width: 64px;
		margin-left: -3px;
	}

	.notif {
		position: relative;
		width: 32px;
		height: 40px;
		display: flex;
		align-items: center;
		justify-content: center;
	}

	.notif .badge-round {
		right: 0;
		bottom: 1px;
	}
</style>
